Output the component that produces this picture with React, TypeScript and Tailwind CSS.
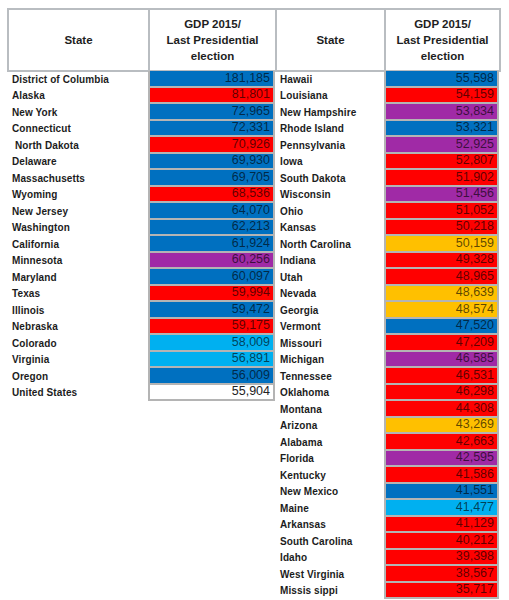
import React from 'react';

type Row = { name: string; value: string; color: string };

const BLUE = 'bg-[#0070c0]';
const RED = 'bg-[#ff0000]';
const PURPLE = 'bg-[#a02aa6]';
const LIGHT = 'bg-[#00b0f0]';
const GOLD = 'bg-[#ffc000]';
const WHITE = 'bg-white';

const leftRows: Row[] = [
    { name: 'District of Columbia', value: '181,185', color: BLUE },
    { name: 'Alaska', value: '81,801', color: RED },
    { name: 'New York', value: '72,965', color: BLUE },
    { name: 'Connecticut', value: '72,331', color: BLUE },
    { name: '\u00a0North Dakota', value: '70,926', color: RED },
    { name: 'Delaware', value: '69,930', color: BLUE },
    { name: 'Massachusetts', value: '69,705', color: BLUE },
    { name: 'Wyoming', value: '68,536', color: RED },
    { name: 'New Jersey', value: '64,070', color: BLUE },
    { name: 'Washington', value: '62,213', color: BLUE },
    { name: 'California', value: '61,924', color: BLUE },
    { name: 'Minnesota', value: '60,256', color: PURPLE },
    { name: 'Maryland', value: '60,097', color: BLUE },
    { name: 'Texas', value: '59,994', color: RED },
    { name: 'Illinois', value: '59,472', color: BLUE },
    { name: 'Nebraska', value: '59,175', color: RED },
    { name: 'Colorado', value: '58,009', color: LIGHT },
    { name: 'Virginia', value: '56,891', color: LIGHT },
    { name: 'Oregon', value: '56,009', color: BLUE },
    { name: 'United States', value: '55,904', color: WHITE },
];

const rightRows: Row[] = [
    { name: 'Hawaii', value: '55,598', color: BLUE },
    { name: 'Louisiana', value: '54,159', color: RED },
    { name: 'New Hampshire', value: '53,834', color: PURPLE },
    { name: 'Rhode Island', value: '53,321', color: BLUE },
    { name: 'Pennsylvania', value: '52,925', color: PURPLE },
    { name: 'Iowa', value: '52,807', color: RED },
    { name: 'South Dakota', value: '51,902', color: RED },
    { name: 'Wisconsin', value: '51,456', color: PURPLE },
    { name: 'Ohio', value: '51,052', color: RED },
    { name: 'Kansas', value: '50,218', color: RED },
    { name: 'North Carolina', value: '50,159', color: GOLD },
    { name: 'Indiana', value: '49,328', color: RED },
    { name: 'Utah', value: '48,965', color: RED },
    { name: 'Nevada', value: '48,639', color: GOLD },
    { name: 'Georgia', value: '48,574', color: GOLD },
    { name: 'Vermont', value: '47,520', color: BLUE },
    { name: 'Missouri', value: '47,209', color: RED },
    { name: 'Michigan', value: '46,585', color: PURPLE },
    { name: 'Tennessee', value: '46,531', color: RED },
    { name: 'Oklahoma', value: '46,298', color: RED },
    { name: 'Montana', value: '44,308', color: RED },
    { name: 'Arizona', value: '43,269', color: GOLD },
    { name: 'Alabama', value: '42,663', color: RED },
    { name: 'Florida', value: '42,595', color: PURPLE },
    { name: 'Kentucky', value: '41,586', color: RED },
    { name: 'New Mexico', value: '41,551', color: BLUE },
    { name: 'Maine', value: '41,477', color: LIGHT },
    { name: 'Arkansas', value: '41,129', color: RED },
    { name: 'South Carolina', value: '40,212', color: RED },
    { name: 'Idaho', value: '39,398', color: RED },
    { name: 'West Virginia', value: '38,567', color: RED },
    { name: 'Missis sippi', value: '35,717', color: RED },
];

const HeaderCell: React.FC<{ width: string; children: React.ReactNode }> = ({ width, children }) => (
    <div className={`${width} h-[64px] border-2 border-[#b9bdc1] -ml-[2px] first:ml-0 flex items-center justify-center text-center text-[11.5px] leading-[16px] font-bold text-[#1e1e1e]`}>
        {children}
    </div>
);

const GdpHeader = () => (
    <>
        GDP 2015/
        <br />
        Last Presidential
        <br />
        election
    </>
);

const NameCol: React.FC<{ rows: Row[]; width: string; pad: string }> = ({ rows, width, pad }) => (
    <div className={`${width} flex flex-col`}>
        {rows.map((r) => (
            <div
                key={r.name}
                className={`h-[16.5px] ${pad} flex items-center whitespace-pre text-[10px] font-bold text-[#1c1c1c] tracking-[0.1px]`}
            >
                {r.name}
            </div>
        ))}
    </div>
);

const ValueCol: React.FC<{ rows: Row[]; width: string }> = ({ rows, width }) => (
    <div className={`${width} flex flex-col`}>
        {rows.map((r) => (
            <div
                key={r.name}
                className={`h-[16.5px] ${r.color} border-x-2 border-b-2 border-[#b4b4b4] flex items-center justify-end pr-[3px] text-[12.5px] ${
                    r.color === WHITE ? 'text-[#222]' : 'text-black/65'
                }`}
            >
                {r.value}
            </div>
        ))}
    </div>
);

export default function App() {
    return (
        <div className="w-[509px] h-[600px] overflow-hidden bg-white pt-[8px] pl-[7px] font-['Liberation_Sans',Arial,sans-serif]">
            <div className="flex">
                <HeaderCell width="w-[143px]">State</HeaderCell>
                <HeaderCell width="w-[129px]">
                    <GdpHeader />
                </HeaderCell>
                <HeaderCell width="w-[111px]">State</HeaderCell>
                <HeaderCell width="w-[117px]">
                    <GdpHeader />
                </HeaderCell>
            </div>
            <div className="flex items-start -mt-[1px]">
                <NameCol rows={leftRows} width="w-[141px]" pad="pl-[5px]" />
                <ValueCol rows={leftRows} width="w-[127px]" />
                <NameCol rows={rightRows} width="w-[109px]" pad="pl-[5px]" />
                <ValueCol rows={rightRows} width="w-[115px]" />
            </div>
        </div>
    );
}
